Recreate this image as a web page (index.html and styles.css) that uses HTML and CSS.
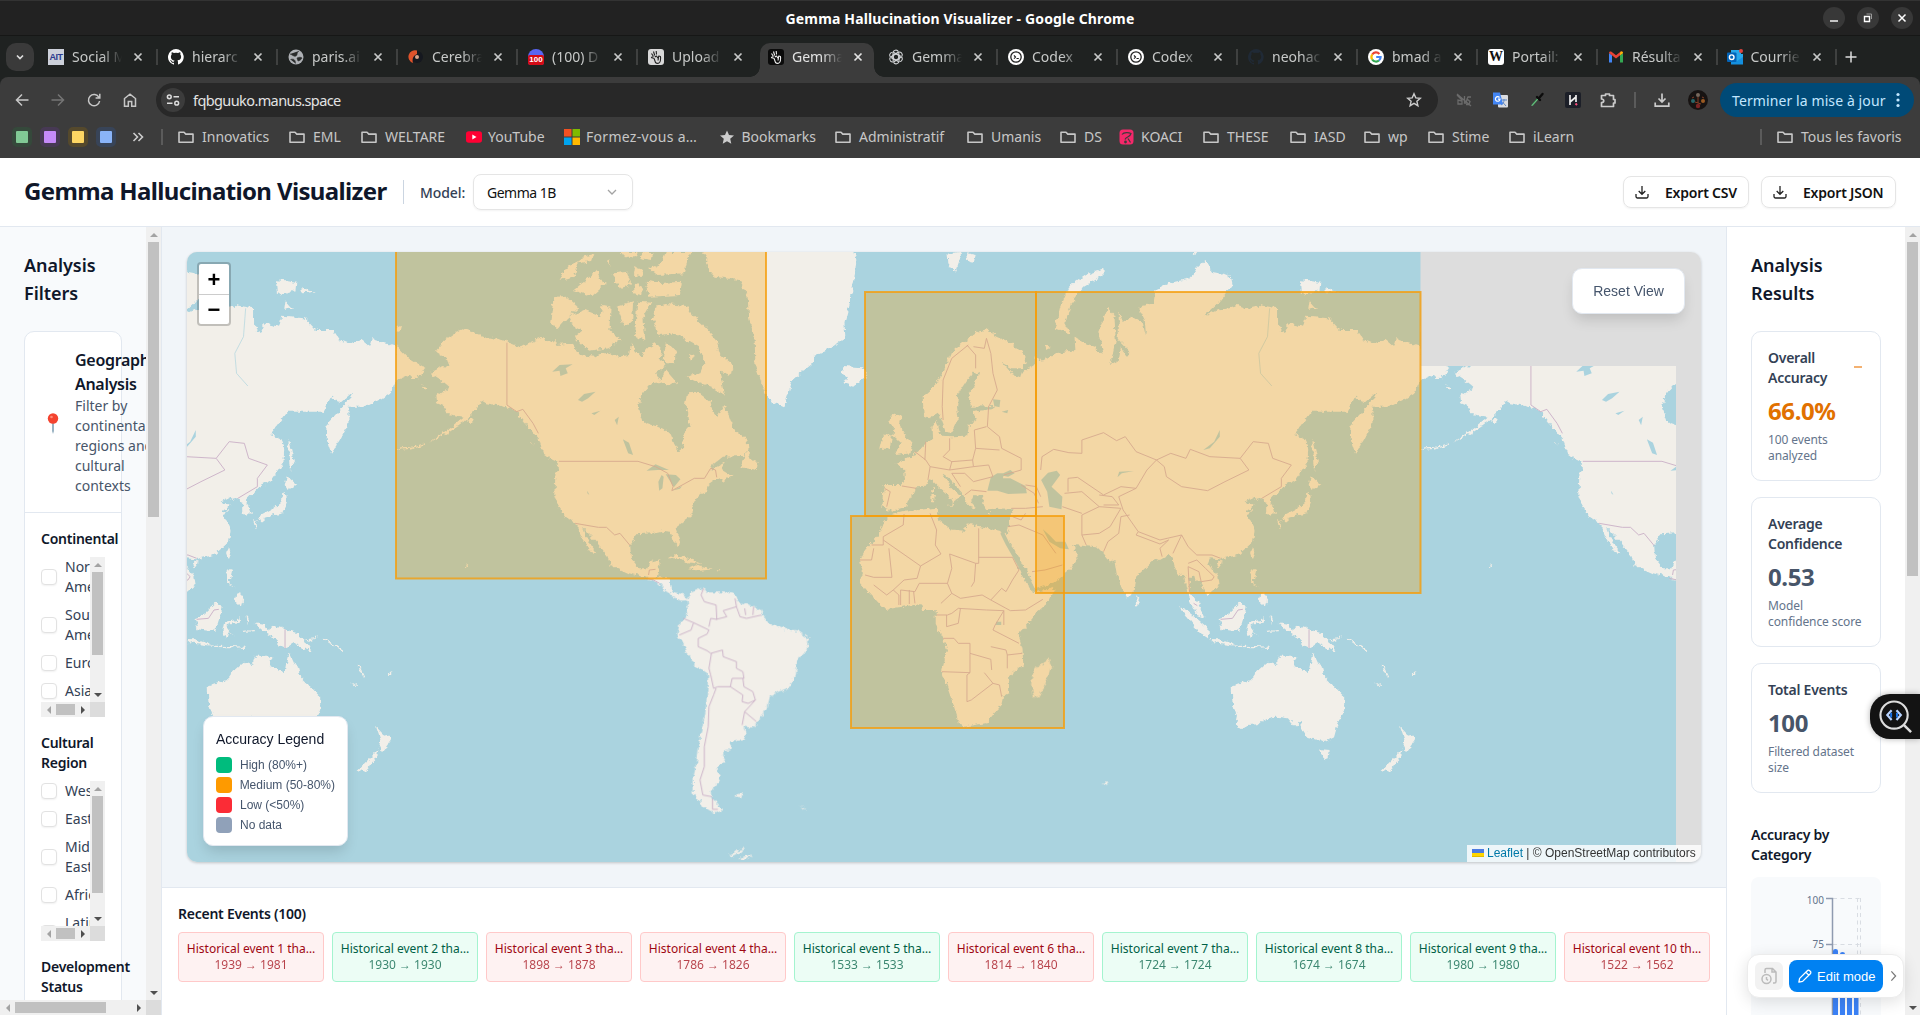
FILE: index.html
```html
<!DOCTYPE html>
<html lang="en">
<head>
<meta charset="utf-8">
<title>Gemma Hallucination Visualizer</title>
<link rel="stylesheet" href="styles.css">
</head>
<body>
<svg class="defs" width="0" height="0">
  <symbol id="folder" viewBox="0 0 16 16"><path d="M1 3.2h5l1.8 1.9H15v8.2H1z" fill="none" stroke="currentColor" stroke-width="1.6" stroke-linejoin="round"/></symbol>
  <symbol id="x" viewBox="0 0 16 16"><path d="M4.5 4.5l7 7M11.5 4.5l-7 7" stroke="currentColor" stroke-width="1.7"/></symbol>
  <symbol id="github" viewBox="0 0 16 16"><path fill="currentColor" d="M8 0a8 8 0 0 0-2.5 15.6c.4.1.5-.2.5-.4v-1.4c-2.2.5-2.7-1-2.7-1-.4-.9-.9-1.200-.9-1.200-.7-.5.1-.5.1-.5.8.1 1.200.8 1.200.8.7 1.200 1.900.9 2.300.7.1-.5.3-.9.500-1.100-1.800-.2-3.600-.9-3.600-4 0-.9.300-1.600.800-2.100-.1-.2-.4-1 .1-2.100 0 0 .700-.2 2.200.8a7.500 7.500 0 0 1 4 0c1.500-1 2.200-.8 2.200-.8.400 1.100.200 1.900.1 2.100.500.600.800 1.300.800 2.100 0 3.100-1.900 3.700-3.700 3.900.3.300.6.800.6 1.500v2.200c0 .2.1.5.5.4A8 8 0 0 0 8 0z"/></symbol>
  <symbol id="codex" viewBox="0 0 16 16"><circle cx="8" cy="8" r="8" fill="#fff"/><circle cx="8" cy="8" r="5.200" fill="none" stroke="#222" stroke-width="1.300"/><path d="M6 6.300l1.500 1.700L6 9.700M8.500 9.500h2.300" fill="none" stroke="#222" stroke-width="1.200"/></symbol>
  <symbol id="hand" viewBox="0 0 16 16"><path d="M3.500 4.500l2 3M5.500 2.500l1.200 4M8.200 2l.3 3.500M4.500 7.500l-1 1.200 2.500.5M6 9.200l1.500 4.300c1 1 3 .8 4.200-.2 1.200-1.800 1-3.800.8-5.800L10.800 7l-.6 2.500L8.500 7 6.800 8M10 11.500l.5-3" fill="none" stroke="currentColor" stroke-width="1.100" stroke-linejoin="round"/></symbol>
  <symbol id="download" viewBox="0 0 16 16"><path d="M8 1.500v8M4.500 6.500L8 10l3.500-3.500M1.200 10.500v3.700h13.600v-3.700" fill="none" stroke="currentColor" stroke-width="1.700"/></symbol>
</svg>

<header class="titlebar">
  <span class="wintitle">Gemma Hallucination Visualizer - Google Chrome</span>
  <div class="winbtns">
    <i><svg viewBox="0 0 22 22"><path d="M7 14h8" stroke="#fff" stroke-width="1.400"/></svg></i>
    <i><svg viewBox="0 0 22 22"><path d="M7.500 9.500h5v5h-5z" fill="none" stroke="#fff" stroke-width="1.400"/><path d="M9.500 7h5v5" fill="none" stroke="#999"/></svg></i>
    <i><svg viewBox="0 0 22 22"><path d="M7.500 7.500l7 7M14.500 7.500l-7 7" stroke="#fff" stroke-width="1.500"/></svg></i>
  </div>
</header>

<nav class="tabs">
  <button class="tabsearch"><svg viewBox="0 0 16 16"><path d="M5 6.500L8 9.500l3-3" fill="none" stroke="#ddd" stroke-width="1.700"/></svg></button>
  <div class="tab"><span class="fav ait">AIT</span><span class="name">Social M</span><svg class="close"><use href="#x"/></svg></div>
  <div class="tab"><svg class="fav white"><use href="#github"/></svg><span class="name">hierarc</span><svg class="close"><use href="#x"/></svg></div>
  <div class="tab"><svg class="fav" viewBox="0 0 16 16"><circle cx="8" cy="8" r="7.500" fill="#aeb1b5"/><path d="M2 5c3 1 4 3 6 2s0-3 3-5M2.500 10.500c3-1 5 0 5 4M9 9c2-1 4-1 5 0-1 2-3 3-4 3z" fill="#2a2c2c" stroke="#2a2c2c" stroke-width=".6"/></svg><span class="name">paris.ai</span><svg class="close"><use href="#x"/></svg></div>
  <div class="tab"><svg class="fav" viewBox="0 0 16 16"><circle cx="9" cy="8" r="6" fill="#15181f"/><path d="M9 1.500A6.500 6.500 0 0 0 5 14c-1-3-.500-7 4-9z" fill="#e0532b"/><circle cx="9" cy="8" r="2" fill="#d9a58c"/></svg><span class="name">Cerebra</span><svg class="close"><use href="#x"/></svg></div>
  <div class="tab"><span class="fav discord"><b>100</b></span><span class="name">(100) D</span><svg class="close"><use href="#x"/></svg></div>
  <div class="tab nosep"><svg class="fav light" viewBox="0 0 16 16"><use href="#hand"/></svg><span class="name">Upload</span><svg class="close"><use href="#x"/></svg></div>
  <div class="tab active nosep"><svg class="fav dark" viewBox="0 0 16 16"><use href="#hand"/></svg><span class="name">Gemma</span><svg class="close"><use href="#x"/></svg></div>
  <div class="tab"><svg class="fav" viewBox="0 0 16 16"><g fill="none" stroke="#d0d2d4" stroke-width="1.100"><path id="petal" d="M5 5.300V3.900A2.900 2.900 0 0 1 10.400 2.600M5 5.300v4.500l3 1.700M5.800 3.500l4.700 2.700"/><use href="#petal" transform="rotate(60 8 8)"/><use href="#petal" transform="rotate(120 8 8)"/><use href="#petal" transform="rotate(180 8 8)"/><use href="#petal" transform="rotate(240 8 8)"/><use href="#petal" transform="rotate(300 8 8)"/></g></svg><span class="name">Gemma</span><svg class="close"><use href="#x"/></svg></div>
  <div class="tab"><svg class="fav"><use href="#codex"/></svg><span class="name">Codex</span><svg class="close"><use href="#x"/></svg></div>
  <div class="tab"><svg class="fav"><use href="#codex"/></svg><span class="name">Codex</span><svg class="close"><use href="#x"/></svg></div>
  <div class="tab"><svg class="fav navy"><use href="#github"/></svg><span class="name">neohac</span><svg class="close"><use href="#x"/></svg></div>
  <div class="tab"><svg class="fav" viewBox="0 0 16 16"><circle cx="8" cy="8" r="8" fill="#fff"/><g fill="none" stroke-width="2.200"><path d="M11.400 4.900A4.600 4.600 0 0 0 4.200 5.500" stroke="#ea4335"/><path d="M4.200 5.500a4.600 4.600 0 0 0 0 5" stroke="#fbbc05"/><path d="M4.200 10.500a4.600 4.600 0 0 0 6.800 1" stroke="#34a853"/><path d="M11 11.500A4.600 4.600 0 0 0 12.600 8H8.200" stroke="#4285f4"/></g></svg><span class="name">bmad a</span><svg class="close"><use href="#x"/></svg></div>
  <div class="tab"><span class="fav wiki">W</span><span class="name">Portail:</span><svg class="close"><use href="#x"/></svg></div>
  <div class="tab"><svg class="fav" viewBox="0 0 16 16"><path d="M1 13.500V4l3 2.300v7.200z" fill="#4285f4"/><path d="M12 13.500V6.300L15 4v9.500z" fill="#34a853"/><path d="M1 4c0-1.500 1.500-2 2.500-1.200L8 6.200l4.500-3.400C13.500 2 15 2.500 15 4l-7 5.500z" fill="#ea4335"/><path d="M12 5.200V6.300L15 4c0-1.500-1.500-2-2.500-1.200z" fill="#fbbc04"/></svg><span class="name">Résulta</span><svg class="close"><use href="#x"/></svg></div>
  <div class="tab"><svg class="fav" viewBox="0 0 16 16"><path d="M4 1h10v4h2v10H4z" fill="#28a8ea"/><path d="M4 9l6 3 6-4v7.500H4z" fill="#1490df"/><rect x="0" y="3.500" width="9.500" height="9.500" rx="1" fill="#0364b8"/><circle cx="4.700" cy="8.200" r="2.300" fill="none" stroke="#fff" stroke-width="1.400"/><circle cx="14" cy="2" r="2" fill="#e0443e"/></svg><span class="name">Courrie</span><svg class="close"><use href="#x"/></svg></div>
  <button class="newtab"><svg viewBox="0 0 16 16"><path d="M8 2.500v11M2.500 8h11" stroke="#ddd" stroke-width="1.500"/></svg></button>
</nav>

<section class="browserbar">
  <div class="toolbar">
    <svg class="tbi" viewBox="0 0 16 16"><path d="M14.500 8H2.500M8 2.500L2.500 8 8 13.500" /></svg>
    <svg class="tbi off" viewBox="0 0 16 16"><path d="M1.500 8h12M8 2.500L13.500 8 8 13.500"/></svg>
    <svg class="tbi" viewBox="0 0 16 16"><path d="M13 5.500A5.600 5.600 0 1 0 13.600 9M13.800 1.800V6H9.600"/></svg>
    <svg class="tbi" viewBox="0 0 16 16"><path d="M2.500 14.200V6.500L8 2.200l5.500 4.300v7.700h-3.800V9.500H6.300v4.700z"/></svg>
    <div class="omnibox">
      <span class="site"><svg viewBox="0 0 16 16"><g fill="none" stroke="#ddd" stroke-width="1.500"><circle cx="4.300" cy="4.800" r="1.900"/><path d="M8.500 4.800h5.500M2 11.200h5.500"/><circle cx="11.700" cy="11.200" r="1.900"/></g></svg></span>
      <span class="url">fqbguuko.manus.space</span>
      <svg class="star" viewBox="0 0 16 16"><path d="M8 1.800l1.800 4.100 4.500.4-3.400 3 1 4.400L8 11.400l-3.900 2.300 1-4.400-3.400-3 4.500-.4z" fill="none" stroke="#ccc" stroke-width="1.400"/></svg>
    </div>
    <svg class="ext" viewBox="0 0 16 16"><path d="M1 3l5 5v4H2V8l4 1M8.500 4v7h1.500l1-3.500M15 5h-3l-1 2 3 2.500-1 3h-3M1 2l14 12" fill="none" stroke="#6b6b6b" stroke-width="1.300"/></svg>
    <svg class="ext" viewBox="0 0 16 16"><rect x="6" y="3" width="10" height="12.500" rx="1" fill="#dadce0"/><path d="M9 8h6M12 7v1c0 2-1 4-3 5M10.500 10l3.500 4" stroke="#5f87c4" fill="none"/><path d="M1 .5h7l3 12H1z" fill="#4285f4"/><path d="M7.500 5.500A2.300 2.300 0 1 0 8 7.200H6" fill="none" stroke="#fff" stroke-width="1.200"/></svg>
    <svg class="ext" viewBox="0 0 16 16"><path d="M3 13.500l6-7" stroke="#3d9b58" stroke-width="1.800"/><path d="M2.500 14L9 7" stroke="#9bd3a8" stroke-width=".6"/><path d="M8 5l3 3M10.500 5.500l3-3.500" stroke="#0c0c0c" stroke-width="2.400" stroke-linecap="round"/></svg>
    <svg class="ext" viewBox="0 0 16 16"><rect width="16" height="16" rx="2" fill="#1c1f28"/><path d="M5 3v10M11 3v7M5 10l6-5" stroke="#eee" stroke-width="1.700"/><path d="M10.500 11.500l1.500 1.500" stroke="#ff4d7e" stroke-width="2"/></svg>
    <svg class="ext" viewBox="0 0 16 16"><path d="M1.500 3.500h4V2h4v1.500h4v4H15v3.500h-1.500v3.500h-12v-4c3 0 3-3.500 0-3.500z" fill="none" stroke="#ccc" stroke-width="1.700" stroke-linejoin="round"/></svg>
    <i class="vsep"></i>
    <svg class="ext gray" viewBox="0 0 16 16"><use href="#download"/></svg>
    <svg class="ava" viewBox="0 0 20 20"><circle cx="10" cy="10" r="10" fill="#171312"/><circle cx="10" cy="5" r="2" fill="#77685d"/><circle cx="5" cy="11" r="2" fill="#27686a"/><circle cx="15" cy="11" r="2" fill="#9b5b23"/><circle cx="10" cy="16" r="2.200" fill="#7c2525"/><path d="M10 7v6M7 12l6 2M6 7l-2 1M14 7l2 1" stroke="#a04a2c" stroke-width=".8"/></svg>
    <button class="update">Terminer la mise à jour<svg viewBox="0 0 4 16"><circle cx="2" cy="2.500" r="1.600"/><circle cx="2" cy="8" r="1.600"/><circle cx="2" cy="13.500" r="1.600"/></svg></button>
  </div>
  <div class="bookmarks">
    <i class="sq g"></i><i class="sq p"></i><i class="sq y"></i><i class="sq b"></i>
    <svg class="more" viewBox="0 0 16 16"><path d="M3.500 4L7.500 8l-4 4M8.500 4l4 4-4 4" fill="none" stroke="#ccc" stroke-width="1.600"/></svg>
    <i class="vsep"></i>
    <span class="bm"><svg><use href="#folder"/></svg>Innovatics</span>
    <span class="bm"><svg><use href="#folder"/></svg>EML</span>
    <span class="bm"><svg><use href="#folder"/></svg>WELTARE</span>
    <span class="bm tight"><svg viewBox="0 0 16 16"><rect y="2.200" width="16" height="11.600" rx="2.800" fill="#f03"/><path d="M6.300 5.500v5L10.500 8z" fill="#fff"/></svg>YouTube</span>
    <span class="bm tight wide"><svg viewBox="0 0 16 16"><path fill="#f25022" d="M0 0h7.500v7.500H0z"/><path fill="#7fba00" d="M8.500 0H16v7.500H8.500z"/><path fill="#00a4ef" d="M0 8.500h7.500V16H0z"/><path fill="#ffb900" d="M8.500 8.500H16V16H8.500z"/></svg>Formez-vous a…</span>
    <span class="bm tight"><svg viewBox="0 0 16 16"><path d="M7 1.500l2 4.500 5 .5-3.800 3.300 1.100 4.900L7 12.200l-4.300 2.500 1.100-4.900L0 6.500 5 6z" fill="#ccc"/></svg>Bookmarks</span>
    <span class="bm"><svg><use href="#folder"/></svg>Administratif</span>
    <span class="bm"><svg><use href="#folder"/></svg>Umanis</span>
    <span class="bm"><svg><use href="#folder"/></svg>DS</span>
    <span class="bm tight"><svg viewBox="0 0 16 16"><rect x=".5" y=".5" width="14" height="15" rx="3.500" fill="#f4286a"/><path d="M3 5.500C5 3 10 3.500 12 4.500c-1 4-5 3-6 6M9 9.500l2.500 4" fill="none" stroke="#3c3c3c" stroke-width="1.200"/><circle cx="6.500" cy="13" r="1.400" fill="#3c3c3c"/></svg>KOACI</span>
    <span class="bm"><svg><use href="#folder"/></svg>THESE</span>
    <span class="bm"><svg><use href="#folder"/></svg>IASD</span>
    <span class="bm"><svg><use href="#folder"/></svg>wp</span>
    <span class="bm"><svg><use href="#folder"/></svg>Stime</span>
    <span class="bm"><svg><use href="#folder"/></svg>iLearn</span>
    <i class="vsep"></i>
    <span class="bm"><svg><use href="#folder"/></svg>Tous les favoris</span>
  </div>
</section>

<div class="apphead">
  <h1>Gemma Hallucination Visualizer</h1>
  <i class="hsep"></i>
  <label>Model:</label>
  <div class="select">Gemma 1B<svg viewBox="0 0 16 16"><path d="M4 6l4 4 4-4" fill="none" stroke="#a3a3a3" stroke-width="1.300"/></svg></div>
  <div class="exports">
    <button class="exp csv"><svg viewBox="0 0 16 16"><path d="M8 2v8M4.700 7L8 10.300 11.300 7M2 10v2.500a1.500 1.500 0 0 0 1.500 1.500h9a1.500 1.500 0 0 0 1.500-1.500V10"/></svg>Export CSV</button>
    <button class="exp json"><svg viewBox="0 0 16 16"><path d="M8 2v8M4.700 7L8 10.300 11.300 7M2 10v2.500a1.500 1.500 0 0 0 1.500 1.500h9a1.500 1.500 0 0 0 1.500-1.500V10"/></svg>Export JSON</button>
  </div>
</div>

<div class="app">
  <aside class="left">
    <div class="leftview">
      <h2>Analysis Filters</h2>
      <div class="fcard">
        <div class="fhead">
          <svg class="pin" viewBox="0 0 12 22"><path d="M5.200 9h1.600v9L6 21l-.8-3z" fill="#7f9fb3"/><circle cx="6" cy="5.500" r="5.200" fill="#f4432f"/><circle cx="4.500" cy="4" r="1.300" fill="#ff8a75"/></svg>
          <div><h3>Geographic Analysis</h3><p>Filter by continental regions and cultural contexts</p></div>
        </div>
        <div class="fbody">
          <h4>Continental</h4>
          <div class="sbox">
            <div class="list">
              <label><i></i><span>North America</span></label>
              <label><i></i><span>South America</span></label>
              <label><i></i><span>Europe</span></label>
              <label><i></i><span>Asia</span></label>
            </div>
            <div class="vbar"><b class="up"></b><s class="t83"></s><b class="down"></b></div>
            <div class="hbar"><b class="lf"></b><s></s><b class="rt"></b></div>
            <div class="corner"></div>
          </div>
          <h4>Cultural Region</h4>
          <div class="sbox">
            <div class="list">
              <label><i></i><span>Western</span></label>
              <label><i></i><span>Eastern</span></label>
              <label><i></i><span>Middle Eastern</span></label>
              <label><i></i><span>African</span></label>
              <label><i></i><span>Latin American</span></label>
            </div>
            <div class="vbar"><b class="up"></b><s class="t97"></s><b class="down"></b></div>
            <div class="hbar"><b class="lf"></b><s></s><b class="rt"></b></div>
            <div class="corner"></div>
          </div>
          <h4>Development Status</h4>
        </div>
      </div>
    </div>
    <div class="vbar"><b class="up"></b><s class="t275"></s><b class="down"></b></div>
    <div class="hbar"><b class="lf"></b><s class="w91"></s><b class="rt"></b></div>
    <div class="corner"></div>
  </aside>

  <main>
    <div class="mapwrap">
      <div class="map">
        <svg class="world" viewBox="187 252 1515 610">
          <defs>
            <clipPath id="tiles"><path d="M187 252H1420.500V366H1676V862H187z"/></clipPath>
            <clipPath id="one"><path d="M396.500 200H1420.500V900H396.500z"/></clipPath>
            <filter id="rough" x="0" y="0" width="100%" height="100%"><feTurbulence type="fractalNoise" baseFrequency=".2" numOctaves="3" seed="4"/><feDisplacementMap in="SourceGraphic" scale="6" xChannelSelector="R" yChannelSelector="G"/></filter>
            <g id="globe" clip-path="url(#one)">
              <g class="land" filter="url(#rough)">
                <g transform="translate(180 240) scale(.40816 .33333)">
                  <path d="M692 265L715 275 750 290 790 300 835 322 855 308 890 290 897 308 920 300 925 315 960 310 980 345 1015 350 1040 335 1060 345 1075 350 1100 345 1105 310 1115 330 1130 350 1145 325 1165 310 1180 330 1175 360 1190 375 1165 400 1180 425 1155 430 1130 465 1122 500 1135 545 1170 560 1205 580 1210 610 1222 635 1235 615 1232 585 1250 560 1245 520 1237 495 1242 460 1270 458 1300 485 1305 515 1315 530 1332 498 1345 530 1355 565 1390 600 1393 625 1380 648 1330 650 1305 675 1300 690 1335 665 1325 690 1345 705 1360 700 1330 725 1322 712 1295 735 1290 755 1270 765 1255 800 1253 825 1225 850 1215 870 1225 905 1222 925 1210 905 1203 875 1180 872 1155 880 1120 883 1103 915 1105 955 1125 985 1148 985 1152 965 1177 958 1172 990 1168 1012 1200 1015 1202 1050 1180 1030 1140 1012 1100 1000 1055 975 1045 945 1020 905 985 860 1000 905 1020 940 1005 935 985 895 968 850 945 830 925 795 917 765 920 700 928 690 928 668 905 655 890 640 880 600 860 570 840 540 825 515 800 502 775 495 750 490 740 482 725 510 700 540 660 575 610 608 660 565 695 530 655 522 650 500 630 490 628 468 660 440 640 420 615 400 640 378 660 380 655 358 625 335 650 300z"/>
                  <path d="M915 175L945 170 978 205 950 235 925 270 907 245zM960 225L990 210 1030 230 1035 195 1055 200 1052 270 1080 300 1050 325 1000 332 965 290 985 270 955 250zM1165 200L1190 192 1240 198 1255 225 1285 260 1315 300 1322 340 1355 375 1350 405 1325 395 1335 465 1300 440 1265 425 1240 410 1275 400 1285 370 1270 320 1240 300 1210 280 1175 285 1158 240z"/>
                  <path d="M1190 36H1250L1240 75 1235 100 1170 105 1150 85 1180 70zM1140 125L1165 130 1230 125 1225 165 1150 170zM975 65L965 110 930 120 950 80zM1000 115L1020 92 1030 120 1045 130 1010 168 965 150 985 130zM1060 100L1095 95 1105 130 1080 150 1070 130zM1070 200L1110 187 1108 240 1090 262 1078 225zM1120 185L1155 188 1135 230 1140 300 1115 290zM985 50L1015 42 1010 62 975 70zM1115 82L1135 90 1130 108 1112 104zM1115 130L1132 140 1130 165 1112 160zM1080 36H1118V48L1090 52zM1135 36H1160L1155 60 1130 55zM1048 58L1054 60 1052 78zM1190 390L1215 425 1200 437 1185 425 1175 430zM1190 310L1215 330 1212 370 1185 365zM1247 340L1260 345 1252 362zM1390 630L1400 660 1415 665 1413 690 1372 682zM1195 955L1212 943 1235 950 1278 972 1242 967 1225 955zM1268 975L1305 988 1275 992 1245 988zM1318 988h8v3h-8zM699 970l5 5-4 6zM700 540L720 535 715 552zM528 315L560 355 600 385 580 420 555 405 528 420zM520 268L540 258 546 268 530 276zM858 600L870 618 860 600zM590 436l15 6-5 4z"/>
                  <path d="M1278 30L1295 60 1288 82 1310 110 1370 120 1390 165 1395 240 1408 300 1410 380 1435 460 1450 485 1480 502 1490 465 1500 420 1550 370 1556 345 1599 320 1630 290 1628 250 1641 190 1652 120 1657 60 1652 30z"/>
                  <path d="M530 628L560 625 600 612" class="isl"/>
                </g>
                <g transform="translate(600 560) scale(.35714 .33333)">
                  <path d="M125 55L195 62 198 95 235 103 247 120 225 122 180 90 165 70zM245 120L255 98 290 82 300 97 345 97 375 100 385 125 430 138 450 150 465 185 510 205 555 212 583 235 583 260 553 300 548 345 530 382 500 395 475 410 470 440 440 490 425 503 400 500 410 520 405 540 368 545 365 568 345 572 345 590 350 600 325 625 338 648 328 670 313 690 315 715 343 750 320 760 290 740 262 700 262 650 272 600 280 530 295 460 300 400 303 345 260 310 235 255 217 225 222 190 238 172 248 145zM375 708L400 698 395 712zM562 735l15 10-4 3zM362 884L400 866 402 870 370 888zM390 897L410 885 425 890 400 900zM1255 288L1263 320 1235 405 1215 412 1207 370 1215 325 1245 310zM1408 668L1425 668 1415 678z"/>
                </g>
                <g transform="translate(800 240) scale(.43367 .33333)">
                  <path d="M430 268L455 290 490 310 520 350 515 385 490 385 465 368 485 400 510 415 515 395 540 375 545 345 555 365 590 340 635 330 633 290 650 305 680 320 700 345 688 275 710 205 725 225 728 300 715 375 735 360 740 325 755 350 762 335 735 300 735 215 745 245 765 230 790 250 798 290 795 240 780 200 815 190 820 150 850 130 900 115 915 85 935 60 950 95 990 105 995 135 965 190 930 232 965 210 1010 195 1030 205 1060 195 1100 205 1100 245 1115 280 1125 250 1160 260 1165 230 1220 235 1245 270 1285 270 1300 300 1320 310 1350 300 1370 320 1375 298 1432 320 1432 415 1420 455 1390 480 1360 500 1320 500 1320 550 1300 600 1280 638 1270 600 1272 550 1300 510 1325 475 1328 458 1300 490 1280 470 1262 515 1180 515 1140 585 1160 592 1172 625 1170 670 1140 725 1115 740 1100 760 1085 780 1095 820 1085 830 1075 815 1075 790 1065 775 1048 780 1050 768 1025 785 1050 795 1030 820 1048 870 1045 905 1010 945 970 958 945 955 940 970 962 1010 965 1035 940 1065 925 1030 905 1010 895 1010 900 1060 920 1090 935 1135 915 1125 898 1075 890 1040 885 1000 870 1008 860 960 850 945 830 960 820 955 775 1010 772 1050 757 1075 745 1050 730 1000 725 960 715 965 700 940 685 922 630 915 640 950 625 985 590 1025 540 1048 530 1010 500 940 475 890 480 870 485 830 490 805 430 808 420 790 425 768 400 765 395 780 405 808 390 800 378 765 345 715 328 700 345 735 370 770 358 780 348 800 350 785 342 765 315 735 300 715 290 740 270 742 250 780 245 800 212 812 190 800 195 750 190 735 235 735 242 720 240 685 220 672 240 660 265 645 290 610 305 600 303 560 315 540 325 590 350 592 385 590 390 555 405 540 400 515 440 508 450 498 395 500 388 470 415 400 400 395 385 420 365 460 362 500 365 530 350 575 335 572 320 520 300 535 285 525 283 470 310 440 330 400 350 335 385 300 410 275z"/>
                  <path d="M210 825L240 815 315 803 318 838 345 868 378 872 385 850 460 872 475 885 510 1000 530 1048 545 1055 587 1043 570 1090 548 1115 504 1185 513 1225 515 1275 480 1310 480 1360 466 1370 461 1400 428 1450 377 1460 367 1450 354 1395 327 1295 339 1230 330 1195 313 1155 313 1110 284 1110 280 1092 200 1107 190 1100 160 1060 138 1025 145 1000 138 960 150 930 180 885 190 850z"/>
                  <path d="M215 520L235 530 230 555 245 590 258 610 255 640 220 645 232 610 215 590 218 565 205 545zM190 590L200 578 212 590 207 625 183 628zM95 400L100 378 145 382 158 405 125 440 100 430 108 412zM340 40L372 36 368 60 358 98 342 70zM385 40L405 45 400 72 388 62zM700 85L700 105 655 140 625 190 612 250 625 282 588 265 600 200 620 140 660 105zM1182 592L1190 640 1195 668 1185 690 1182 640zM1178 708L1202 735 1180 750 1173 735zM1172 755L1178 790 1168 820 1130 832 1110 842 1115 828 1150 803 1165 785zM1100 840L1112 850 1106 868zM1118 835L1130 835 1118 848zM1045 922L1048 935 1042 955 1038 940zM965 962L975 965 965 985 960 975zM1042 985L1052 990 1045 1030 1062 1042 1040 1030zM1065 1065L1078 1070 1072 1100 1055 1080zM773 1065L785 1085 775 1097zM1153 118L1172 120 1200 125 1198 150 1155 165zM1210 142L1240 155 1215 160zM1175 182L1190 205 1172 210zM905 40L918 36 912 46zM565 315L578 320 568 330zM345 797L352 803 340 798zM303 765h8l-2 22h-6zM305 742h4v16h-4zM432 820L442 815 436 824z"/>
                </g>
                <g transform="translate(1140 560) scale(.3699 .33333)">
                  <path d="M105 138L125 150 185 205 187 235 165 220 140 190zM130 95L150 130 172 172 160 165 138 130zM212 175L235 165 270 128 288 142 278 180 268 215 220 208zM187 237L215 238 265 258 200 250zM320 275L348 260 340 265zM292 190L332 178 333 168 335 182 298 197 318 228 305 212 298 238 288 210zM375 190L405 195 410 212 430 198 490 220 510 240 530 276 500 262 480 248 460 265 435 258 440 240 400 215zM510 238L535 235 548 222 545 232 525 242zM353 165L362 175 356 195zM365 210L378 212zM600 262L615 275zM248 380L300 360 315 335 345 305 367 315 375 290 423 290 415 315 455 340 462 300 467 278 480 310 490 315 498 350 530 385 552 410 552 450 535 490 525 530 497 546 485 540 455 535 440 510 435 485 420 502 400 475 370 470 330 482 320 493 290 495 275 507 257 495 262 470 250 430zM485 567L513 570 510 595 497 600zM703 500L720 520 745 540 722 577 712 560 715 540zM710 568L705 590 675 635 653 630 690 590zM633 362L657 382 650 380zM735 340L744 337 744 345 736 345zM325 100L342 105 343 130 322 125z"/>
                  <path d="M268 259L310 260 350 262M340 214L378 212M560 235L580 250 615 275M655 315L672 355" class="isl"/>
                </g>
              </g>
              <g class="lake">
                <g transform="translate(180 240) scale(.40816 .33333)"><path d="M912 395L930 375 962 373 945 385 950 400 932 408 930 392zM975 480L990 462 1018 455 1000 475 985 485zM1085 598L1100 608 1110 645 1098 640zM1143 692L1165 673 1198 690 1170 690zM1180 705L1172 725 1174 752 1182 745 1185 710zM1190 703L1215 705 1226 718 1210 742zM1205 752L1230 738 1225 746zM1008 520L1030 512 1015 525zM998 752L1003 765 998 760zM1065 540l10-10-4 26z"/></g>
                <g transform="translate(800 240) scale(.43367 .33333)"><path d="M432 752L440 712 455 700 470 700 468 715 485 715 520 738 523 760 480 762 455 752zM460 705L485 690 495 700 480 710zM572 698L592 692 600 705 580 740 605 770 603 808 575 800 570 755 556 720zM968 570L968 590 945 625 930 630 955 605zM732 712L736 695 770 693 742 700zM560 868L575 885 590 905 612 905 620 928 600 925 575 905zM445 478L462 480 460 502 448 498zM478 520L465 515 480 510zM452 1145h12v10h-12z"/><path d="M466 878L478 910 500 960 522 1010 538 1050" class="sea"/><path d="M1083 205L1078 290 1058 340 1062 400 1088 438" class="riv"/></g>
              </g>
              <g class="border">
                <g transform="translate(180 240) scale(.40816 .33333)"><path d="M801 308V495L825 515 840 508 865 550 878 580M928 664H1122L1165 680 1195 700 1208 740 1205 752 1235 732 1260 715 1285 715 1300 685 1312 690 1315 712M968 850L1025 862 1045 862 1065 885 1078 880 1103 917M1148 1005L1150 990 1165 988M1140 1015L1160 1020 1175 1030"/></g>
                <g transform="translate(600 560) scale(.35714 .33333)"><path d="M290 85L283 105 292 125 325 135 327 178 310 175 305 200M325 178L355 170 345 152 382 140 378 115M382 140L392 170 410 175 452 165M405 145L408 165M430 140L428 165M233 175L262 188 305 210M262 188L255 210 222 225M305 210L300 222 275 235 275 260 300 272 310 280 343 270 345 290 382 305 382 325 400 335 403 355 370 355 365 380 330 380 318 385 310 345 305 325 312 280M400 355L403 380 428 395 435 420 415 430 398 425 400 405 365 380M435 420L405 455 398 495M405 455L438 485M325 385L318 405 305 440 303 500 292 560 292 620 280 660 288 705 313 710M315 715V748H330"/></g>
                <g transform="translate(800 240) scale(.43367 .33333)"><path d="M555 690L558 650 585 628 620 638 650 640 650 600 700 578 730 602 750 590 775 635 822 660 800 690 775 745 740 740 700 765 640 712 618 715V755M822 660L855 640 890 655 900 628 945 650 1015 655 1035 690 980 725 940 752 880 740 845 710 840 680zM1015 655L1045 605 1080 610 1090 655 1133 675 1110 715V740L1065 775M775 745L735 770 745 810 780 875 830 900 880 885 895 920 915 945 950 945 970 955M760 825L740 830 735 880 710 905 700 935M650 825L690 800 740 805 715 860 690 880 650 885zM605 800L650 820M650 885L660 915M780 875L775 885 830 912 850 900 830 925 835 950M880 885L860 940M895 970L915 960 935 985 955 1010 950 1020 925 1025 920 995 895 980 898 1055M555 770L545 740 520 735M690 765L720 770 735 795 700 795M610 760L650 755 690 800"/>
                <path d="M388 315L350 355 330 420 328 500 330 540M385 315L405 345V385M430 295L440 340 445 400 455 450 435 500 432 560 460 590 465 625 510 655 510 690 470 705M400 320L425 325 430 295M345 595V630L330 650 350 665 398 660 405 625 460 630M405 625L402 570 430 560M265 635L290 660 300 680 295 720M290 605L288 660M300 680L345 690 350 665M345 690L400 680 398 660M400 680L435 675 445 710 400 725 380 700 350 700 370 740M380 765L395 750 430 755M195 745L208 755 200 800M235 738L268 745M488 805L520 805 560 800M510 735L540 760 550 790M480 860L505 855 560 885 590 940M490 830L510 840 520 820M535 995L565 990 605 975"/>
                <path d="M240 822L238 855 192 890V915H165M192 900L278 978 325 942 312 915 315 870 300 820M138 960H165L170 925M205 925L212 1012H170L150 1005M278 978L270 1015 240 1020 215 1050 200 1065 170 1035M345 942L405 970H412M412 865V970M412 952H490M405 970L402 1025 395 1040M345 942L350 985 340 1030 275 1030 265 1055 232 1050V1095M252 1050V1092M262 1055L265 1090M215 1050L228 1065V1095M340 1030L350 1060 325 1090M350 1060L370 1075 420 1065 440 1080 465 1045 475 1055 490 1020 505 990 490 952M440 1080L485 1112 520 1110 560 1078M315 1125H340L350 1120 365 1105 430 1110 470 1112 450 1155 445 1170 505 1210M470 1112V1155M338 1125V1160L365 1150 370 1105M330 1195H355L365 1210 392 1210V1240L440 1258 442 1290M392 1240V1298L327 1295M392 1298L385 1305V1385M425 1298L445 1330 395 1380 385 1385M445 1330L460 1335 465 1370M440 1220L475 1230 478 1245 512 1240M478 1245L478 1285"/></g>
                <g transform="translate(1140 560) scale(.3699 .33333)"><path d="M457 208V265M218 178L250 175 265 150 278 148M145 130L155 137"/></g>
              </g>
            </g>
          </defs>
          <rect x="187" y="252" width="1515" height="610" fill="#ddd"/>
          <g clip-path="url(#tiles)">
            <rect x="187" y="252" width="1515" height="610" fill="#aad3df"/>
            <use href="#globe"/><use href="#globe" x="-1024"/><use href="#globe" x="1024"/>
          </g>
          <g class="zones">
            <rect x="396" y="240" width="370" height="338.500"/>
            <rect x="865" y="292" width="171" height="224"/>
            <rect x="1036" y="292" width="384.500" height="301"/>
            <rect x="851" y="516" width="213" height="212"/>
          </g>
        </svg>
        <div class="zoomctl"><button>+</button><button>−</button></div>
        <button class="reset">Reset View</button>
        <div class="legend">
          <h5>Accuracy Legend</h5>
          <div><i class="hi"></i>High (80%+)</div>
          <div><i class="me"></i>Medium (50-80%)</div>
          <div><i class="lo"></i>Low (&lt;50%)</div>
          <div><i class="no"></i>No data</div>
        </div>
        <div class="attr"><svg viewBox="0 0 12 8"><path fill="#4C7BE1" d="M0 0h12v4H0z"/><path fill="#FFD500" d="M0 4h12v3H0z"/><path fill="#E0BC00" d="M0 7h12v1H0z"/></svg><a>Leaflet</a> | © OpenStreetMap contributors</div>
      </div>
    </div>
    <section class="recent">
      <h4>Recent Events (100)</h4>
      <div class="events">
        <div class="ev bad"><b>Historical event 1 tha…</b><span>1939 → 1981</span></div>
        <div class="ev ok"><b>Historical event 2 tha…</b><span>1930 → 1930</span></div>
        <div class="ev bad"><b>Historical event 3 tha…</b><span>1898 → 1878</span></div>
        <div class="ev bad"><b>Historical event 4 tha…</b><span>1786 → 1826</span></div>
        <div class="ev ok"><b>Historical event 5 tha…</b><span>1533 → 1533</span></div>
        <div class="ev bad"><b>Historical event 6 tha…</b><span>1814 → 1840</span></div>
        <div class="ev ok"><b>Historical event 7 tha…</b><span>1724 → 1724</span></div>
        <div class="ev ok"><b>Historical event 8 tha…</b><span>1674 → 1674</span></div>
        <div class="ev ok"><b>Historical event 9 tha…</b><span>1980 → 1980</span></div>
        <div class="ev bad"><b>Historical event 10 th…</b><span>1522 → 1562</span></div>
      </div>
    </section>
  </main>

  <aside class="right">
    <div class="results">
      <h2>Analysis Results</h2>
      <div class="stat"><div class="shead"><h4>Overall Accuracy</h4><i class="dash"></i></div><strong class="amber">66.0%</strong><p>100 events analyzed</p></div>
      <div class="stat"><h4>Average Confidence</h4><strong>0.53</strong><p>Model confidence score</p></div>
      <div class="stat"><h4>Total Events</h4><strong>100</strong><p>Filtered dataset size</p></div>
      <h4 class="chead">Accuracy by Category</h4>
      <div class="chart">
        <svg viewBox="0 0 130 138" width="130" height="138">
          <path d="M82 21.500h28M82 67.500h28M106.500 21v117M109.500 21v117" stroke="#d9dde3" stroke-dasharray="4 3.500"/>
          <path d="M75 21.500h6.500V138M75 67.500h6.500" fill="none" stroke="#8f9bb0" stroke-width="1.500"/>
          <g fill="#3b82f6"><path d="M82 138V74q0-2 2.500-2t2.500 2v64zM89 138V77q0-2 2.500-2t2.500 2v61zM96 138V95h5v43zM103 138V95h4.500v43z"/></g>
          <text x="73" y="27" text-anchor="end">100</text><text x="73" y="71" text-anchor="end">75</text>
        </svg>
      </div>
    </div>
    <div class="vbar"><b class="up"></b><s class="t334"></s><b class="down"></b></div>
    <div class="editbar">
      <span class="hist"><svg viewBox="0 0 18 18"><path d="M5 6V3a1.500 1.500 0 0 1 1.500-1.500h6L16 5v9.500a1.500 1.500 0 0 1-1.500 1.500H13M12 1.500V5h4" /><circle cx="6.500" cy="12" r="4.500"/><path d="M6.500 10v2.200L8 13.300"/></svg></span>
      <button class="edit"><svg viewBox="0 0 16 16"><path d="M2 14l.8-4L11 1.800a1.700 1.700 0 0 1 2.500 0l.7.700a1.700 1.700 0 0 1 0 2.500L6 13.200zM9.500 3.500l3 3" fill="none" stroke="#fff" stroke-width="1.400" stroke-linejoin="round"/></svg>Edit mode</button>
      <svg class="chev" viewBox="0 0 8 14"><path d="M1.500 1.500L6.500 7l-5 5.500" fill="none" stroke="#777" stroke-width="1.400"/></svg>
    </div>
    <div class="inspect"><svg viewBox="0 0 36 36"><circle cx="15.500" cy="15.500" r="14" fill="none" stroke="#ddd" stroke-width="2.200"/><path d="M25.500 25.500L33 33" stroke="#ddd" stroke-width="2.600"/><path d="M13 10.500L8.500 15.500l4.500 5" fill="none" stroke="#b9d4ff" stroke-width="2.200"/><path d="M18 10.500l4.500 5-4.500 5" fill="none" stroke="#b9d4ff" stroke-width="2.200"/><path d="M12.500 13v5M18.500 13v5" stroke="#1a73e8" stroke-width="2"/></svg></div>
  </aside>
</div>
</body>
</html>
```
FILE: styles.css
```css
* { box-sizing: border-box; margin: 0; padding: 0; }
html, body { width: 1920px; height: 1015px; overflow: hidden; }
body { font-family: "Noto Sans", "Open Sans", sans-serif; font-size: 14px; display: flex; flex-direction: column; background: #fff; }
button { font: inherit; border: 0; background: none; }
i, s, em { font-style: normal; text-decoration: none; }
svg { display: block; flex: none; }
.defs { position: absolute; }

.titlebar { height: 36px; flex: none; background: #222; border-top: 1px solid #333; border-bottom: 1px solid #161716; display: grid; grid-template-columns: 1fr auto 1fr; align-items: center; }
.wintitle { grid-column: 2; color: #fff; font-weight: 700; font-size: 14px; letter-spacing: .15px; white-space: nowrap; }
.winbtns { display: flex; gap: 12px; justify-content: flex-end; padding-right: 7px; }
.winbtns i { width: 22px; height: 22px; border-radius: 50%; background: #383838; }

.tabs { height: 41px; flex: none; background: #1f2221; display: grid; grid-template-columns: 34px repeat(13, 120px) 118.500px 119px 30px; padding-left: 6px; align-items: center; }
.tabsearch { width: 28px; height: 28px; border-radius: 10px; background: #3a3a3a; padding: 6px; margin-top: 1px; }
.tab { height: 34px; align-self: end; display: flex; align-items: center; padding: 0 0 6px 8px; position: relative; color: #c7c9c8; }
.tab .fav { width: 16px; height: 16px; flex: none; margin-right: 8px; }
.tab .name { width: 50px; white-space: nowrap; -webkit-mask-image: linear-gradient(90deg, #000 60%, transparent); mask-image: linear-gradient(90deg, #000 60%, transparent); line-height: 20px; }
.tab .close { width: 16px; height: 16px; margin-left: 8px; }
.tab:not(.nosep)::after { content: ""; width: 2px; height: 16px; background: #3f4140; margin-left: 10px; }
.tab.active { color: #e3e3e3; }
.tab.active::before { content: ""; position: absolute; left: 0; top: 0; width: 114px; height: 34px; background: #3c3c3c; border-radius: 10px 10px 0 0; z-index: 0; }
.tab.active::after { content: ""; position: absolute; left: -10px; bottom: 0; width: 134px; height: 10px; margin: 0; background: radial-gradient(circle at 0 0, transparent 9.500px, #3c3c3c 10px) left / 10px 10px no-repeat, radial-gradient(circle at 100% 0, transparent 9.500px, #3c3c3c 10px) right / 10px 10px no-repeat; }
.tab.active > * { position: relative; }
.white { color: #fff; } .navy { color: #202a36; }
.light { background: #d8d8d8; color: #222; border-radius: 3px; } .dark { background: #0b0b0b; color: #eee; border-radius: 3px; }
.ait { background: #ccd0da; color: #2b3a8f; font: 700 9px/16px "Liberation Sans", sans-serif; letter-spacing: -.5px; text-align: center; }
.wiki { background: #fff; color: #111; border-radius: 3px; font: 700 14px/16px "Liberation Serif", serif; text-align: center; }
.discord { background: #5865f2; border-radius: 8px 8px 3px 3px; display: flex; align-items: flex-end; }
.discord b { background: #d40b16; color: #fff; width: 16px; font: 700 8px/10px "Liberation Sans", sans-serif; text-align: center; border-radius: 2px; }
.newtab { width: 16px; height: 16px; justify-self: center; margin-right: 4px; }

.browserbar { height: 81px; flex: none; background: #1f2221; }
.toolbar { height: 46px; background: #3c3c3c; border-radius: 8px 8px 0 0; display: grid; align-items: center; grid-template-columns: 36px 36px 36px 36px 1290px 36px 36px 37px 35px 36px 18px 36px 36px 1fr; padding: 0 6px 0 12px; }
.tbi { width: 16px; height: 16px; margin-left: 2px; fill: none; stroke: #c7c7c7; stroke-width: 1.500; }
.tbi.off { stroke: #757575; }
.toolbar .tbi { justify-self: start; }
.omnibox { height: 34px; margin-right: 8px; border-radius: 17px; background: #282828; display: flex; align-items: center; padding: 0 16px 0 5px; }
.site { width: 24px; height: 24px; border-radius: 50%; background: #3c3c3c; padding: 4px; margin-right: 8px; }
.url { color: #e3e3e3; flex: 1; letter-spacing: -.55px; padding-bottom: 1px; }
.url { letter-spacing: -.6px; font-size: 14.500px; }
.star { width: 16px; height: 16px; }
.ext { width: 16px; height: 16px; justify-self: center; }
.gray { color: #ccc; }
.ava { width: 20px; height: 20px; justify-self: center; }
.vsep { width: 2px; height: 16px; background: #5b5b5b; justify-self: center; }
.update { height: 34px; border-radius: 17px; background: #004a77; color: #c2e7ff; display: flex; align-items: center; justify-content: space-between; padding: 0 14px 0 12px; margin-left: 4px; white-space: nowrap; letter-spacing: .1px; }
.update svg { width: 4px; height: 16px; fill: #c2e7ff; }
.bookmarks { height: 35px; background: #3c3c3c; color: #c7c7c7; display: grid; align-items: center; padding: 0 0 8px 12px;
  grid-template-columns: 28px 28px 28px 28px 28px 26px 111px 72px 105px 98px 155.500px 115.500px 132px 93px 59px 84px 87px 74px 64px 81px 234px 34px 1fr; }
.sq { width: 20px; height: 20px; border-radius: 5px; border: 4px solid; }
.sq.g { background: #81c995; border-color: #35493b; } .sq.p { background: #c58af9; border-color: #473954; }
.sq.y { background: #fdd663; border-color: #55492c; } .sq.b { background: #8ab4f8; border-color: #384458; }
.more { width: 16px; height: 16px; justify-self: center; }
.bookmarks .vsep { background: #5b5b5b; justify-self: end; margin-right: 15px; }
.bm { display: flex; align-items: center; gap: 8px; white-space: nowrap; }
.bm.tight { gap: 6px; }
.bm.wide { letter-spacing: .3px; }
.bm svg { width: 16px; height: 16px; }

.apphead { height: 69px; flex: none; border-bottom: 1px solid #e2e8f0; display: flex; align-items: center; padding: 0 24px; }
h1 { font-size: 24px; font-weight: 700; color: #0f172a; letter-spacing: -.64px; width: 379px; white-space: nowrap; line-height: 32px; padding-bottom: 2px; }
.hsep { width: 1px; height: 24px; background: #cbd5e1; margin-right: 16px; }
.apphead label { color: #334155; font-weight: 500; width: 53px; letter-spacing: -.1px; }
.select { width: 160px; height: 36px; border: 1px solid #e5e5e5; border-radius: 8px; display: flex; align-items: center; justify-content: space-between; padding: 0 12px 0 13px; color: #111; letter-spacing: -.5px; box-shadow: 0 1px 2px rgba(0,0,0,.05); }
.select svg { width: 16px; }
.exports { margin-left: auto; display: flex; gap: 12px; }
.exp { height: 32px; border: 1px solid #e5e5e5; border-radius: 8px; display: flex; align-items: center; font-weight: 600; letter-spacing: -.2px; color: #111; padding-left: 10px; gap: 15px; white-space: nowrap; box-shadow: 0 1px 2px rgba(0,0,0,.05); }
.exp svg { width: 16px; height: 16px; fill: none; stroke: #222; stroke-width: 1.300; }
.csv { width: 126px; } .json { width: 135px; }

.app { flex: 1; display: grid; grid-template-columns: 162px 1564px 194px; min-height: 0; }
h2 { font-size: 18px; font-weight: 600; line-height: 28px; color: #0f172a; letter-spacing: -.05px; }
h4 { font-size: 14px; font-weight: 600; line-height: 20px; color: #0f172a; letter-spacing: -.25px; }
.left { background: #f8fafc; border-right: 1px solid #e2e8f0; display: grid; grid-template: 1fr 15px / 146px 15px; min-height: 0; }
.leftview { overflow: hidden; padding: 24px; }
.fcard { width: 98px; margin-top: 24px; border: 1px solid #e2e8f0; border-radius: 10px; background: #fff; height: 800px; }
.fhead { height: 181px; border-bottom: 1px solid #e2e8f0; padding: 16px 0 16px 20px; display: flex; align-items: center; }
.pin { width: 12px; height: 22px; margin: 4px 16px 0 2px; }
.fhead h3 { font-size: 16px; font-weight: 600; line-height: 24px; color: #0f172a; width: 90px; letter-spacing: -.3px; }
.fhead p { line-height: 20px; color: #475569; width: 82px; }
.fbody { padding: 16px; }
.fbody h4 { margin-bottom: 8px; width: 64px; }
.sbox { height: 160px; display: grid; grid-template: 145px 15px / 49px 15px; margin-bottom: 16px; }
.list { overflow: hidden; display: flex; flex-direction: column; gap: 8px; }
.list label { display: flex; align-items: center; gap: 8px; flex: none; color: #334155; }
.list i { width: 16px; height: 16px; flex: none; border: 1px solid #e2e2e2; border-radius: 4px; background: #fff; box-shadow: 0 1px 2px rgba(0,0,0,.06); }
.list span { line-height: 20px; width: 64px; flex: none; }
.vbar { background: #f0f0f0; display: flex; flex-direction: column; align-items: center; }
.hbar { background: #f0f0f0; display: flex; align-items: center; }
.vbar s { width: 11px; background: #c1c1c1; }
.hbar s { height: 11px; width: 19px; background: #c1c1c1; }
.hbar s.w91 { width: 91px; }
.vbar b, .hbar b { width: 15px; height: 15px; flex: none; }
.vbar b::before, .hbar b::before { content: ""; display: block; }
.up, .down, .lf, .rt { display: grid; place-content: center; }
.up::before { border: 4px solid transparent; border-bottom-color: #a3a3a3; border-top: 0; }
.down::before { border: 4px solid transparent; border-top-color: #505050; border-bottom: 0; }
.lf::before { border: 4px solid transparent; border-right-color: #a3a3a3; border-left: 0; }
.rt::before { border: 4px solid transparent; border-left-color: #505050; border-right: 0; }
.vbar .down { margin-top: auto; }
.hbar .rt { margin-left: auto; }
.corner { background: #dcdcdc; }
.t83 { height: 83px; } .t97 { height: 97px; } .t275 { height: 275px; } .t334 { height: 334px; }

main { background: #f1f5f9; display: flex; flex-direction: column; min-width: 0; }
.mapwrap { height: 660px; padding: 25px; padding-bottom: 24px; }
.map { position: relative; height: 610px; width: 1514px; border-radius: 10px; overflow: hidden; box-shadow: 0 1px 3px rgba(0,0,0,.2); font-family: "Liberation Sans", Arial, sans-serif; }
.world { width: 1515px; height: 610px; }
.land { fill: #f2efe9; }
.land path { stroke: none; }
.land .isl, .sea, .riv { fill: none; vector-effect: non-scaling-stroke; }
.land .isl { stroke: #f2efe9; stroke-width: 1.300; }
.lake { fill: #aad3df; }
.sea { stroke: #aad3df; stroke-width: 4; }
.riv { stroke: #b8d8e0; stroke-width: .8; }
.border path { fill: none; stroke: #c9afc6; stroke-width: .9; vector-effect: non-scaling-stroke; }
.zones rect { fill: #f59e0b; fill-opacity: .3; stroke: #f59e0b; stroke-opacity: .8; stroke-width: 2; }
.zoomctl { position: absolute; left: 10px; top: 10px; width: 34px; border: 2px solid rgba(0,0,0,.2); border-radius: 4px; background-clip: padding-box; background-color: #fff; }
.zoomctl button { display: block; width: 30px; height: 30px; font: bold 22px/32px "Liberation Sans", Arial, sans-serif; }
.zoomctl button + button { border-top: 1px solid #ccc; line-height: 27px; }
.reset { position: absolute; right: 16px; top: 16px; width: 113px; height: 46px; background: #fff; border: 1px solid #e2e8f0; border-radius: 10px; color: #45556c; font-size: 14px; box-shadow: 0 8px 14px -3px rgba(0,0,0,.15); }
.legend { position: absolute; left: 16px; bottom: 16px; width: 145px; height: 130px; background: #fff; border: 1px solid #e2e8f0; border-radius: 10px; padding: 12px; box-shadow: 0 8px 14px -3px rgba(0,0,0,.15); color: #45556c; font-size: 12px; }
.legend h5 { font-weight: 400; font-size: 14px; line-height: 20px; color: #0f172a; margin-bottom: 6px; }
.legend div { height: 20px; display: flex; align-items: center; gap: 8px; white-space: nowrap; }
.legend i { width: 16px; height: 16px; border-radius: 4px; }
.hi { background: #00bc7d; } .me { background: #fe9a00; } .lo { background: #fb2c36; } .no { background: #90a1b9; }
.attr { position: absolute; right: 0; bottom: 0; width: 234px; height: 17px; background: rgba(255,255,255,.8); font-size: 12px; line-height: 17px; color: #333; padding-left: 5px; white-space: nowrap; }
.attr svg { width: 12px; height: 8px; display: inline-block; margin-right: 3px; }
.attr a { color: #0078a8; }

.recent { flex: 1; border-top: 1px solid #e2e8f0; background: #fff; padding: 16px; }
.recent h4 { margin-bottom: 8px; }
.events { display: grid; grid-template-columns: repeat(10, 1fr); gap: 8px; }
.ev { height: 50px; border: 1px solid; border-radius: 4px; padding: 8px 0; text-align: center; font-size: 12px; line-height: 16px; white-space: nowrap; display: flex; flex-direction: column; }
.ev b { font-weight: 400; }
.ev span { opacity: .75; }
.bad { background: #fef2f2; border-color: #ffc9c9; color: #9f0712; }
.ok { background: #ecfdf5; border-color: #a4f4cf; color: #006045; }

.right { position: relative; border-left: 1px solid #e2e8f0; display: grid; grid-template-columns: 178px 15px; min-height: 0; }
.results { padding: 24px 0 0 24px; overflow: hidden; }
.results h2 { width: 100px; margin-bottom: 24px; }
.stat { width: 130px; border: 1px solid #e2e8f0; border-radius: 10px; padding: 16px; margin-bottom: 16px; height: 150px; }
.stat:nth-of-type(3) { height: 130px; }
.stat h4 { color: #334155; }
.shead { display: flex; justify-content: space-between; align-items: center; }
.shead h4 { width: 70px; }
.dash { width: 8px; height: 2px; background: #f3b171; margin-right: 2px; margin-top: -2px; }
.stat strong { display: block; font-size: 24px; line-height: 32px; color: #475569; margin: 7px 0 5px; letter-spacing: -.4px; }
.stat .amber { color: #e17100; }
.stat p { font-size: 12px; line-height: 16px; color: #64748b; letter-spacing: -.1px; }
.chead { width: 100px; margin: 32px 0 12px; }
.chart { width: 130px; height: 200px; background: #f8fafc; border-radius: 8px; }
.chart text { font-size: 10px; fill: #64748b; }
.editbar { position: absolute; left: 20px; bottom: 17px; width: 157px; height: 44px; border-radius: 12px; background: #fff; border: 1px solid #ececec; box-shadow: 0 4px 16px rgba(0,0,0,.12); display: flex; align-items: center; padding-left: 7px; font-family: "Liberation Sans", Arial, sans-serif; }
.hist { width: 28px; height: 28px; border-radius: 6px; background: #f2f2f2; padding: 5px; margin-right: 6px; }
.hist svg { fill: none; stroke: #bbb; stroke-width: 1.500; width: 18px; height: 18px; }
.edit { width: 94px; height: 32px; border-radius: 8px; background: #0081f2; color: #fff; display: flex; align-items: center; gap: 5px; padding-left: 8px; font-size: 13px; white-space: nowrap; }
.edit svg { width: 15px; height: 15px; }
.chev { width: 7px; height: 12px; margin-left: 7px; }
.inspect { position: absolute; right: 0; top: 467px; width: 50px; height: 45px; border-radius: 20px 0 0 20px; background: #131313; padding: 6px 0 0 9px; box-shadow: 0 0 6px rgba(0,0,0,.3); }
.inspect svg { width: 35px; height: 35px; }
```
